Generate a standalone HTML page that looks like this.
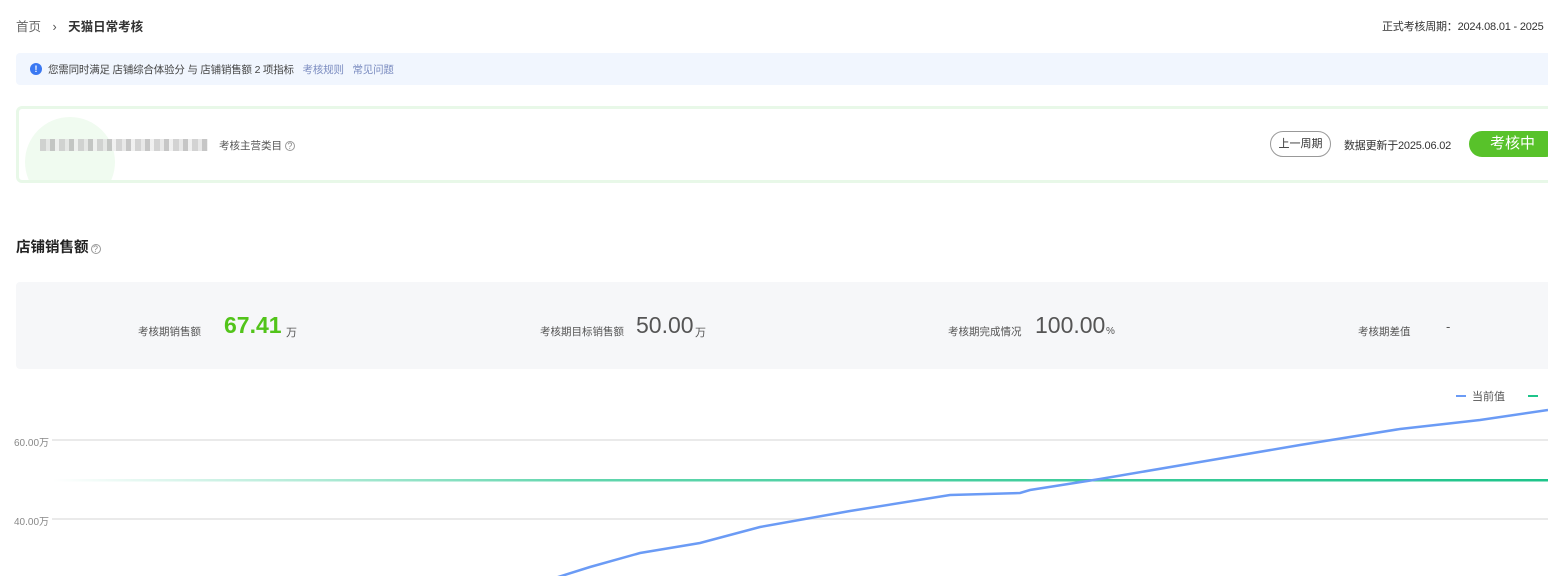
<!DOCTYPE html>
<html><head><meta charset="utf-8"><style>
*{margin:0;padding:0;box-sizing:border-box}
body{width:1548px;height:576px;overflow:hidden;background:#fff;font-family:"Liberation Sans","Noto Sans CJK SC",sans-serif;color:#333;position:relative}
.a{position:absolute;white-space:nowrap}
</style></head><body>
<div class="a" style="left:16px;top:16px;font-size:12.5px;color:#666">首页 <span style="margin:0 8px;color:#555">›</span> <b style="color:#333">天猫日常考核</b></div>
<div class="a" style="left:1382px;top:18px;font-size:11px;color:#333;letter-spacing:-0.2px">正式考核周期：2024.08.01 - 2025</div>

<div class="a" style="left:16px;top:53px;width:1540px;height:32px;background:#f1f6fe;border-radius:4px"></div>
<div class="a" style="left:30px;top:63px;width:12px;height:12px;border-radius:50%;background:#3a78f2;color:#fff;font-size:9px;text-align:center;line-height:12px;font-weight:bold">!</div>
<div class="a" style="left:48px;top:62px;font-size:10.5px;color:#444;letter-spacing:-0.2px">您需同时满足 店铺综合体验分 与 店铺销售额 2 项指标 <span style="color:#7b8cc0;margin-left:6px">考核规则</span> <span style="color:#7b8cc0;margin-left:6px">常见问题</span></div>

<div class="a" style="left:16px;top:106px;width:1545px;height:77px;border:3px solid #e8f8e8;border-radius:6px;overflow:hidden">
<div class="a" style="left:6px;top:8px;width:90px;height:90px;border-radius:50%;background:#f0fbf0"></div>
</div>
<div class="a" style="left:40px;top:139px;width:168px;height:12px;background:repeating-linear-gradient(90deg,#c8c8c8 0 6px,#e2e2e2 6px 10px,#b8b8b8 10px 15px,#ededed 15px 19px);opacity:.8"></div>
<div class="a" style="left:219px;top:138px;font-size:10.5px;color:#555">考核主营类目 <span style="font-size:9px;border:1px solid #999;border-radius:50%;display:inline-block;width:10px;height:10px;line-height:9px;text-align:center;color:#888">?</span></div>
<div class="a" style="left:1270px;top:131px;width:61px;height:26px;border:1px solid #999;border-radius:13px;font-size:11px;text-align:center;line-height:24px;color:#333">上一周期</div>
<div class="a" style="left:1344px;top:137px;font-size:11px;color:#333;letter-spacing:-0.2px">数据更新于2025.06.02</div>
<div class="a" style="left:1469px;top:131px;width:90px;height:26px;border-radius:13px;background:#58c22a;color:#fff;font-size:15px;line-height:26px;padding-left:21px">考核中</div>

<div class="a" style="left:16px;top:236px;font-size:14.5px;font-weight:bold;color:#222">店铺销售额<span style="font-size:9px;font-weight:normal;border:1px solid #999;border-radius:50%;display:inline-block;width:10px;height:10px;line-height:9px;text-align:center;color:#888;margin-left:2px">?</span></div>

<div class="a" style="left:16px;top:282px;width:1540px;height:87px;background:#f6f7f9;border-radius:4px"></div>
<div class="a" style="left:138px;top:324px;font-size:10.5px;color:#555">考核期销售额</div>
<div class="a" style="left:224px;top:312px;font-size:23px;font-weight:bold;color:#52c41a">67.41</div>
<div class="a" style="left:286px;top:324px;font-size:11px;color:#555">万</div>
<div class="a" style="left:540px;top:324px;font-size:10.5px;color:#555">考核期目标销售额</div>
<div class="a" style="left:636px;top:312px;font-size:23px;color:#555">50.00</div>
<div class="a" style="left:695px;top:324px;font-size:11px;color:#555">万</div>
<div class="a" style="left:948px;top:324px;font-size:10.5px;color:#555">考核期完成情况</div>
<div class="a" style="left:1035px;top:312px;font-size:23px;color:#555">100.00</div>
<div class="a" style="left:1106px;top:326px;font-size:10px;color:#555">%</div>
<div class="a" style="left:1358px;top:324px;font-size:10.5px;color:#555">考核期差值</div>
<div class="a" style="left:1446px;top:319px;font-size:13px;color:#555">-</div>

<div class="a" style="left:1456px;top:395px;width:10px;height:2px;background:#6b9bf5"></div>
<div class="a" style="left:1472px;top:388px;font-size:11px;color:#555">当前值</div>
<div class="a" style="left:1528px;top:395px;width:10px;height:2px;background:#1ec48a"></div>

<div class="a" style="left:14px;top:434px;font-size:10px;color:#888">60.00万</div>
<div class="a" style="left:14px;top:513px;font-size:10px;color:#888">40.00万</div>
<svg class="a" style="left:0;top:0" width="1548" height="576">
<defs><linearGradient id="g" gradientUnits="userSpaceOnUse" x1="52" y1="0" x2="1548" y2="0"><stop offset="0" stop-color="#1ec48a" stop-opacity="0"/><stop offset=".35" stop-color="#1ec48a" stop-opacity=".7"/><stop offset="1" stop-color="#1ec48a"/></linearGradient></defs>
<line x1="52" y1="440" x2="1548" y2="440" stroke="#eaeaea" stroke-width="2"/>
<line x1="52" y1="519" x2="1548" y2="519" stroke="#eaeaea" stroke-width="2"/>
<rect x="52" y="479" width="1496" height="2.5" fill="url(#g)"/>
<polyline fill="none" stroke="#6b9bf5" stroke-width="2.5" points="555,578 590,567 640,553 700,543 760,527 850,511 950,495 1020,493 1030,490 1100,479 1200,462 1300,445 1400,429 1480,420 1548,410"/>
</svg>
</body></html>
